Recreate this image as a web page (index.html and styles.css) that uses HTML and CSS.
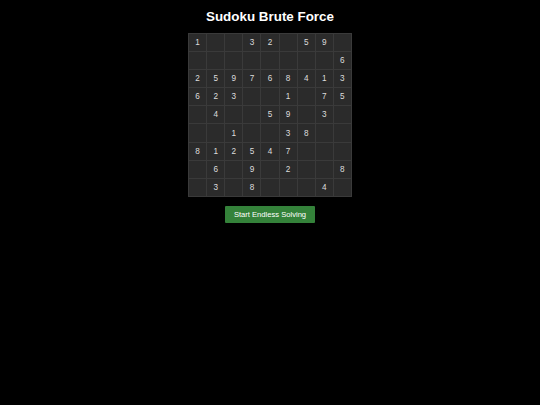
FILE: index.html
```html
<!DOCTYPE html>
<html>
<head>
    <title>Sudoku Brute Force</title>
    <link rel="stylesheet" href="styles.css">
</head>
<body>
    <h1>Sudoku Brute Force</h1>
    <div class="board" id="board"></div>
    <button class="solve-btn" id="solveBtn">Start Endless Solving</button>
    <script>
        let puzzle = [
            "1..32.59.",
            "........6",
            "259768413",
            "623..1.75",
            ".4..59.3.",
            "..1..38..",
            "812547...",
            ".6.9.2..8",
            ".3.8...4."
        ];
        let board = document.getElementById("board");
        puzzle.forEach(row => {
            for (let ch of row) {
                let cell = document.createElement("div");
                cell.className = "cell";
                cell.textContent = ch === "." ? "" : ch;
                board.appendChild(cell);
            }
        });
    </script>
</body>
</html>
```

FILE: styles.css
```css
body {
    margin: 0;
    padding-top: 9px;
    background-color: #000;
    color: #fff;
    font-family: "Liberation Sans", Arial, sans-serif;
    display: flex;
    flex-direction: column;
    align-items: center;
}
h1 {
    font-size: 13.4px;
    font-weight: bold;
    margin: 0 0 8px;
    line-height: 16px;
}
.board {
    display: grid;
    grid-template-columns: repeat(9, 17.1px);
    grid-auto-rows: 17.1px;
    gap: 1px;
    padding: 1px;
    background-color: #3a3a3a;
}
.cell {
    background-color: #2b2b2b;
    color: #ddd;
    font-size: 8.2px;
    display: flex;
    align-items: center;
    justify-content: center;
}
.solve-btn {
    margin-top: 9px;
    width: 90px;
    height: 17px;
    padding: 0;
    background-color: #34823a;
    color: #fff;
    border: none;
    border-radius: 1px;
    font-family: "Liberation Sans", Arial, sans-serif;
    font-size: 7.6px;
    cursor: pointer;
}
```
